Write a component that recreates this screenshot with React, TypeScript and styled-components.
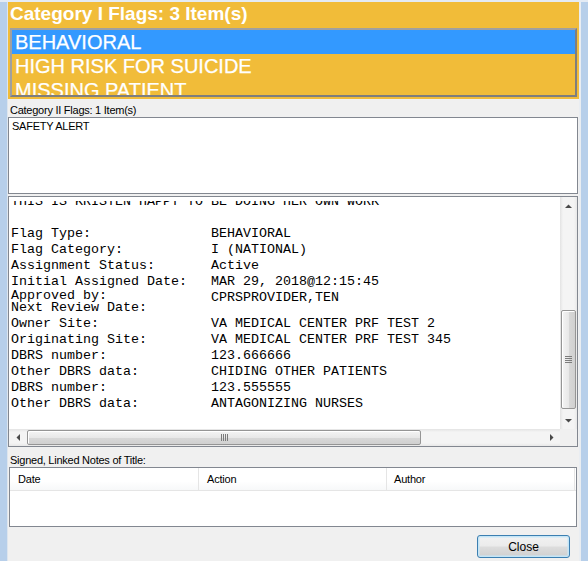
import React from "react";
import styled, { createGlobalStyle } from "styled-components";

const GlobalStyle = createGlobalStyle`
  html, body { margin: 0; padding: 0; background: #ffffff; }
  body {
    width: 588px;
    height: 568px;
    overflow: hidden;
    font-family: "Liberation Sans", Arial, sans-serif;
  }
`;

const Window = styled.div`
  width: 588px;
  height: 561px;
  box-sizing: border-box;
  background: #b7cfea;
  border-top: 2px solid #e4ebf4;
  padding: 0 7px;
  display: flex;
`;

const Client = styled.div`
  width: 571px;
  flex: none;
  border-left: 1px solid #dde5ee;
  border-right: 2px solid #e9edf2;
  background: #f0f0f0;
  display: flex;
  flex-direction: column;
`;

const FlagPanel = styled.div`
  height: 97px;
  box-sizing: border-box;
  background: #f1bc39;
  padding-bottom: 2px;
  display: flex;
  flex-direction: column;
`;

const FlagTitle = styled.div`
  height: 26px;
  box-sizing: border-box;
  padding: 0 0 2px 2px;
  font-size: 19px;
  line-height: 24px;
  font-weight: bold;
  color: #ffffff;
  white-space: nowrap;
`;

const FlagList = styled.div`
  height: 69px;
  box-sizing: border-box;
  margin: 0 2px;
  border: 2px solid;
  border-color: #a0a0a0 #7e7e7e #7e7e7e #a0a0a0;
  overflow: hidden;
  background: #f1bc39;
`;

const FlagItem = styled.div<{ $selected?: boolean }>`
  height: 24px;
  flex: none;
  padding-left: 3px;
  font-size: 20px;
  line-height: 24px;
  color: #ffffff;
  -webkit-text-stroke: 0.25px #ffffff;
  white-space: nowrap;
  background: ${(p) => (p.$selected ? "#3399ff" : "transparent")};
`;

const SmallLabel = styled.div<{ $height: number; $top: number }>`
  height: ${(p) => p.$height}px;
  box-sizing: border-box;
  padding: ${(p) => p.$top}px 0 0 2px;
  font-size: 11px;
  line-height: 13px;
  letter-spacing: -0.25px;
  color: #000000;
  white-space: nowrap;
`;

const PlainList = styled.div`
  height: 77px;
  box-sizing: border-box;
  margin-right: 1px;
  border: 1px solid #828790;
  background: #ffffff;
  padding: 2px 3px;
`;

const PlainItem = styled.div`
  font-size: 11px;
  line-height: 13px;
  letter-spacing: -0.25px;
  color: #000000;
  white-space: nowrap;
`;

const Memo = styled.div`
  height: 251px;
  width: 570px;
  box-sizing: border-box;
  margin-top: 2px;
  border: 1px solid #828790;
  background: #ffffff;
  display: grid;
  grid-template-columns: 1fr 17px;
  grid-template-rows: 1fr 17px;
`;

const MemoText = styled.div`
  border-top: 4px solid #ffffff;
  overflow: hidden;
  padding-left: 2px;
  min-width: 0;
`;

const MemoLines = styled.div`
  margin-top: -7px;
  font-family: "Liberation Mono", "Courier New", monospace;
  font-size: 13.33px;
  line-height: 16px;
  color: #000000;
  white-space: pre;
`;

const MemoRow = styled.div<{ $lh?: number }>`
  display: flex;
  height: ${(p) => p.$lh ?? 16}px;
  line-height: ${(p) => p.$lh ?? 16}px;
`;

const MemoBlock = styled.div`
  height: 26px;
`;

const MemoLabel = styled.span`
  width: 200px;
  flex: none;
`;

const MemoValue = styled.span<{ $drop?: number }>`
  padding-top: ${(p) => p.$drop ?? 0}px;
`;

const VScroll = styled.div`
  display: flex;
  flex-direction: column;
  background: linear-gradient(to right, #e3e3e3 0%, #f4f4f4 18%, #f4f4f4 82%, #e8e8e8 100%);
`;

const HScroll = styled.div`
  display: flex;
  background: linear-gradient(to bottom, #e3e3e3 0%, #f4f4f4 18%, #f4f4f4 82%, #e8e8e8 100%);
`;

const Corner = styled.div`
  background: #f0f0f0;
`;

const ArrowButton = styled.div`
  width: 17px;
  height: 17px;
  flex: none;
  display: flex;
  align-items: center;
  justify-content: center;
`;

const VTrack = styled.div<{ $offset: number }>`
  flex: 1;
  padding-top: ${(p) => p.$offset}px;
  display: flex;
  flex-direction: column;
  align-items: center;
`;

const HTrack = styled.div<{ $offset: number }>`
  flex: 1;
  padding-left: ${(p) => p.$offset}px;
  display: flex;
  align-items: center;
`;

const VThumb = styled.div<{ $size: number }>`
  width: 15px;
  height: ${(p) => p.$size}px;
  box-sizing: border-box;
  border: 1px solid #959595;
  border-radius: 2px;
  background: linear-gradient(to right, #f4f4f4 0%, #e8e8e8 50%, #d8d8d8 51%, #d0d0d0 100%);
  box-shadow: inset 1px 1px 0 #ffffff;
  display: flex;
  align-items: center;
  justify-content: center;
`;

const HThumb = styled.div<{ $size: number }>`
  height: 15px;
  width: ${(p) => p.$size}px;
  box-sizing: border-box;
  border: 1px solid #959595;
  border-radius: 2px;
  background: linear-gradient(to bottom, #f4f4f4 0%, #e8e8e8 50%, #d8d8d8 51%, #d0d0d0 100%);
  box-shadow: inset 1px 1px 0 #ffffff;
  display: flex;
  align-items: center;
  justify-content: center;
`;

const ListView = styled.div`
  height: 60px;
  box-sizing: border-box;
  margin: 0 2px 0 1px;
  border: 1px solid #828790;
  background: #ffffff;
`;

const Header = styled.div`
  height: 23px;
  box-sizing: border-box;
  display: flex;
  border-bottom: 1px solid #e5e5e5;
  background: linear-gradient(to bottom, #ffffff 0%, #ffffff 60%, #f7f8f9 100%);
`;

const HeaderCell = styled.div<{ $width: number; $pad: number }>`
  width: ${(p) => p.$width}px;
  flex: none;
  box-sizing: border-box;
  padding-left: ${(p) => p.$pad}px;
  border-right: 1px solid #e5e5e5;
  font-size: 11px;
  line-height: 22px;
  letter-spacing: -0.2px;
  color: #000000;
`;

const ButtonRow = styled.div`
  padding: 8px 9px 0 0;
  display: flex;
  justify-content: flex-end;
`;

const Button = styled.button`
  width: 93px;
  height: 23px;
  box-sizing: border-box;
  margin: 0;
  padding: 0;
  border: 1px solid #3c7fb1;
  border-radius: 3px;
  background: linear-gradient(to bottom, #f2f2f2 0%, #ebebeb 48%, #dddddd 52%, #cfcfcf 100%);
  box-shadow: inset 0 0 0 1px #c4e5f6, inset 0 0 0 2px rgba(200, 232, 250, 0.5);
  font-family: "Liberation Sans", Arial, sans-serif;
  font-size: 12px;
  color: #000000;
`;

type Dir = "up" | "down" | "left" | "right";

const Arrow: React.FC<{ dir: Dir }> = ({ dir }) => {
  const pts: Record<Dir, string> = {
    up: "0,4 3.5,0.5 7,4",
    down: "0,0 3.5,3.5 7,0",
    left: "4,0 0.5,3.5 4,7",
    right: "0,0 3.5,3.5 0,7",
  };
  const vertical = dir === "up" || dir === "down";
  return (
    <svg width={vertical ? 7 : 4} height={vertical ? 4 : 7} viewBox={vertical ? "0 0 7 4" : "0 0 4 7"}>
      <polygon points={pts[dir]} fill="#4a4a4a" />
    </svg>
  );
};

const Grip: React.FC<{ vertical: boolean }> = ({ vertical }) =>
  vertical ? (
    <svg width="7" height="7" viewBox="0 0 7 7">
      {[0, 2, 4, 6].map((y) => (
        <rect key={y} x="0" y={y} width="7" height="1" fill="#7c7c7c" />
      ))}
    </svg>
  ) : (
    <svg width="7" height="7" viewBox="0 0 7 7">
      {[0, 2, 4, 6].map((x) => (
        <rect key={x} x={x} y="0" width="1" height="7" fill="#7c7c7c" />
      ))}
    </svg>
  );

const flags = ["BEHAVIORAL", "HIGH RISK FOR SUICIDE", "MISSING PATIENT"];

const detailsTop: [string, string][] = [
  ["Flag Type:", "BEHAVIORAL"],
  ["Flag Category:", "I (NATIONAL)"],
  ["Assignment Status:", "Active"],
  ["Initial Assigned Date:", "MAR 29, 2018@12:15:45"],
];

const detailsBottom: [string, string][] = [
  ["Owner Site:", "VA MEDICAL CENTER PRF TEST 2"],
  ["Originating Site:", "VA MEDICAL CENTER PRF TEST 345"],
  ["DBRS number:", "123.666666"],
  ["Other DBRS data:", "CHIDING OTHER PATIENTS"],
  ["DBRS number:", "123.555555"],
  ["Other DBRS data:", "ANTAGONIZING NURSES"],
];

export default function App() {
  return (
    <>
      <GlobalStyle />
      <Window>
        <Client>
          <FlagPanel>
            <FlagTitle>Category I Flags: 3 Item(s)</FlagTitle>
            <FlagList>
              {flags.map((f, i) => (
                <FlagItem key={f} $selected={i === 0}>
                  {f}
                </FlagItem>
              ))}
            </FlagList>
          </FlagPanel>

          <SmallLabel $height={18} $top={5}>Category II Flags: 1 Item(s)</SmallLabel>
          <PlainList>
            <PlainItem>SAFETY ALERT</PlainItem>
          </PlainList>

          <Memo>
            <MemoText>
              <MemoLines>
                <MemoRow>THIS IS KRISTEN HAPPY TO BE DOING HER OWN WORK</MemoRow>
                <MemoRow> </MemoRow>
                {detailsTop.map(([l, v]) => (
                  <MemoRow key={l}>
                    <MemoLabel>{l}</MemoLabel>
                    <MemoValue>{v}</MemoValue>
                  </MemoRow>
                ))}
                <MemoBlock>
                  <MemoRow $lh={12}>
                    <MemoLabel>Approved by:</MemoLabel>
                    <MemoValue $drop={2}>CPRSPROVIDER,TEN</MemoValue>
                  </MemoRow>
                  <MemoRow $lh={12}>
                    <MemoLabel>Next Review Date:</MemoLabel>
                  </MemoRow>
                </MemoBlock>
                {detailsBottom.map(([l, v], i) => (
                  <MemoRow key={i}>
                    <MemoLabel>{l}</MemoLabel>
                    <MemoValue>{v}</MemoValue>
                  </MemoRow>
                ))}
              </MemoLines>
            </MemoText>
            <VScroll>
              <ArrowButton>
                <Arrow dir="up" />
              </ArrowButton>
              <VTrack $offset={96}>
                <VThumb $size={99}>
                  <Grip vertical />
                </VThumb>
              </VTrack>
              <ArrowButton>
                <Arrow dir="down" />
              </ArrowButton>
            </VScroll>
            <HScroll>
              <ArrowButton>
                <Arrow dir="left" />
              </ArrowButton>
              <HTrack $offset={1}>
                <HThumb $size={394}>
                  <Grip vertical={false} />
                </HThumb>
              </HTrack>
              <ArrowButton>
                <Arrow dir="right" />
              </ArrowButton>
            </HScroll>
            <Corner />
          </Memo>

          <SmallLabel $height={20} $top={7}>Signed, Linked Notes of Title:</SmallLabel>
          <ListView>
            <Header>
              <HeaderCell $width={189} $pad={8}>Date</HeaderCell>
              <HeaderCell $width={188} $pad={8}>Action</HeaderCell>
              <HeaderCell $width={188} $pad={7}>Author</HeaderCell>
            </Header>
          </ListView>

          <ButtonRow>
            <Button>Close</Button>
          </ButtonRow>
        </Client>
      </Window>
    </>
  );
}
